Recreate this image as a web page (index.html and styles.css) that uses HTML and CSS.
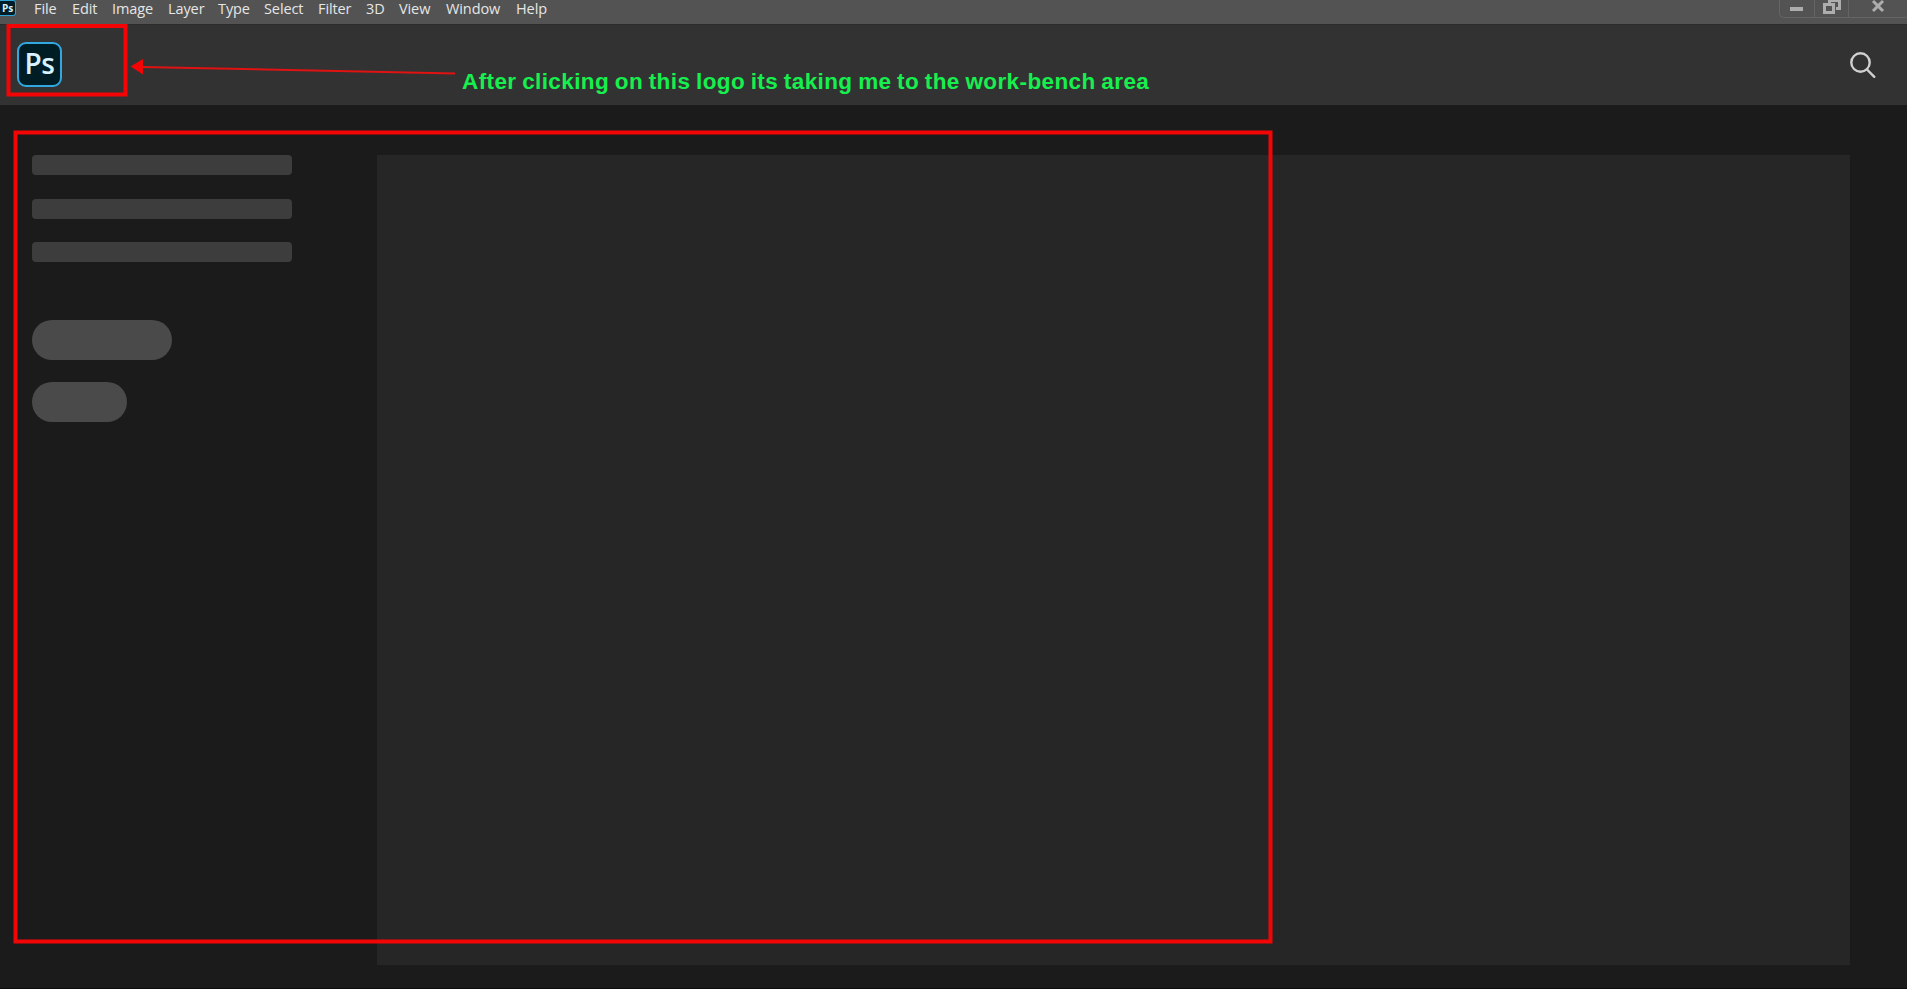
FILE: index.html
```
<!DOCTYPE html>
<html lang="en">
<head>
    <meta charset="UTF-8">
    <meta name="viewport" content="width=device-width, initial-scale=1.0">
    <title>Photoshop Home</title>
    <link rel="stylesheet" href="styles.css">
</head>
<body>
    <header class="menu-bar">
        <div class="app-icon">Ps</div>
        <nav class="menu">
            <span>File</span>
            <span>Edit</span>
            <span>Image</span>
            <span>Layer</span>
            <span>Type</span>
            <span>Select</span>
            <span>Filter</span>
            <span>3D</span>
            <span>View</span>
            <span>Window</span>
            <span>Help</span>
        </nav>
        <div class="window-controls">
            <svg width="129" height="18" viewBox="0 0 129 18">
                <path class="frame" d="M.5 0V13.500Q.5 17.500 4.500 17.500H125Q128 17.500 128.500 16M35.500 0V17M69.500 0V17"/>
                <path class="glyph" d="M11 7h13v4H11z"/>
                <path class="glyph" fill-rule="evenodd" d="M44 3h12v11H44zM47 6v5h6V6z"/>
                <path class="glyph" d="M49 0h13v10h-5V7h2V2h-7v1h-3z"/>
                <path class="cross" d="M94 1l10 10M104 1L94 11"/>
            </svg>
        </div>
    </header>

    <div class="top-bar">
        <div class="logo">Ps</div>
        <svg class="search" width="26" height="27" viewBox="0 0 26 27">
            <circle cx="10.500" cy="10.500" r="9.200"/>
            <path d="M17 17.500l7.300 7.300"/>
        </svg>
    </div>

    <main class="content">
        <aside class="sidebar">
            <div class="line"></div>
            <div class="line"></div>
            <div class="line last"></div>
            <div class="pill"></div>
            <div class="pill small"></div>
        </aside>
        <section class="workspace"></section>
    </main>

    <!-- Annotations over the page -->
    <svg class="marks" width="1907" height="989" viewBox="0 0 1907 989">
        <rect x="8.500" y="26" width="117" height="68.500"/>
        <rect x="15.500" y="132.500" width="1255" height="809"/>
        <path class="arrow-line" d="M142 67L455 73.500"/>
        <path class="arrow-head" d="M130.500 66.500L143 59v15.500z"/>
    </svg>
    <p class="note">After clicking on this logo its taking me to the work-bench area</p>
</body>
</html>
```

FILE: styles.css
```
* {
    box-sizing: border-box;
}
body {
    margin: 0;
    height: 989px;
    display: flex;
    flex-direction: column;
    background-color: #1b1b1b;
    border-bottom: 1px solid #0c0c0c;
    font-family: "Open Sans", "Noto Sans", sans-serif;
    position: relative;
    overflow: hidden;
}
.menu-bar {
    height: 25px;
    display: flex;
    background-color: #535353;
    border-bottom: 1px solid #2b2b2b;
}
.app-icon {
    width: 16px;
    height: 16px;
    border: 1px solid #2da3d6;
    border-left: none;
    border-radius: 0 3px 3px 0;
    background-color: #001d28;
    color: #d8f2ff;
    font-size: 10px;
    font-weight: bold;
    line-height: 14px;
    text-align: center;
}
.menu {
    margin-left: 18px;
    display: grid;
    grid-template-columns: 38px 40px 56px 50px 46px 54px 48px 33px 47px 70px auto;
    font-size: 14.5px;
    line-height: 17px;
    letter-spacing: -0.1px;
    color: #e6e6e6;
    white-space: nowrap;
}
.window-controls {
    margin-left: auto;
    margin-right: -1px;
}
.window-controls svg {
    display: block;
}
.frame {
    fill: none;
    stroke: #656565;
}
.glyph {
    fill: #adadad;
}
.cross {
    fill: none;
    stroke: #adadad;
    stroke-width: 3;
}
.top-bar {
    height: 80px;
    display: flex;
    justify-content: space-between;
    align-items: flex-start;
    padding: 17px 31px 0 17px;
    background-color: #323232;
}
.logo {
    width: 45px;
    height: 45px;
    border: 2px solid #31a8e0;
    border-radius: 9px;
    background-color: #001d26;
    color: #d8f2ff;
    font-size: 28px;
    font-weight: 600;
    font-stretch: 93%;
    line-height: 39px;
    letter-spacing: -0.5px;
    text-align: center;
}
.search {
    margin-top: 10px;
    fill: none;
    stroke: #d0d0d0;
    stroke-width: 2.4;
    stroke-linecap: round;
}
.content {
    flex: 1;
    display: flex;
    padding: 50px 57px 23px 32px;
}
.sidebar {
    width: 345px;
}
.line {
    width: 260px;
    height: 20px;
    margin-bottom: 24px;
    border-radius: 4px;
    background-color: #3d3d3d;
}
.line.last {
    margin-top: -1px;
    margin-bottom: 58px;
}
.pill {
    width: 140px;
    height: 40px;
    margin-bottom: 22px;
    border-radius: 20px;
    background-color: #4a4a4a;
}
.pill.small {
    width: 95px;
}
.workspace {
    flex: 1;
    background-color: #262626;
}
.marks {
    position: absolute;
    top: 0;
    left: 0;
}
.marks rect {
    fill: none;
    stroke: #f40505;
    stroke-width: 4;
}
.arrow-line {
    stroke: #e01212;
    stroke-width: 2;
}
.arrow-head {
    fill: #f40505;
}
.note {
    position: absolute;
    top: 69px;
    left: 462px;
    margin: 0;
    color: #16f04e;
    font-family: "Liberation Sans", Arial, sans-serif;
    font-size: 22.5px;
    font-weight: bold;
    line-height: 26px;
    letter-spacing: 0.4px;
    word-spacing: -1px;
    white-space: nowrap;
}
```
